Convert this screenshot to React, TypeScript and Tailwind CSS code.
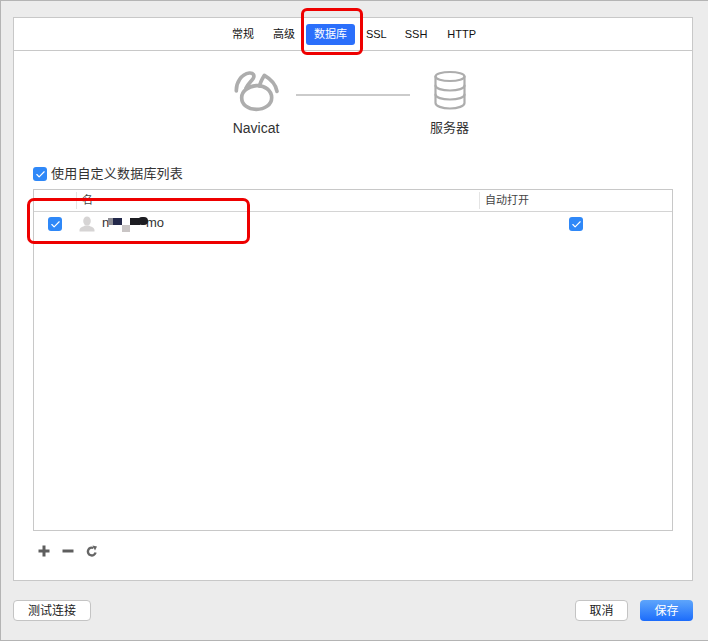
import { Check } from "lucide-react";

const font = { fontFamily: '"Liberation Sans", "Noto Sans CJK SC", sans-serif' };

const Checkbox = () => (
    <span className="flex items-center justify-center w-[14px] h-[14px] rounded-[3px] bg-[#2f88f8] shrink-0">
        <Check size={11} strokeWidth={2.5} className="text-white" />
    </span>
);

const NavicatIcon = () => (
    <svg width="45" height="42" viewBox="30 30 135 126" fill="none" stroke="#adadad" strokeWidth="11" strokeLinecap="round" strokeLinejoin="round">
        <path d="M37 93C36 68 52 42 76 39C88 38 93 47 87 56C81 65 72 72 66 84" />
        <path d="M159 94C156 76 142 58 121 46C115 56 108 67 107 78" />
        <path d="M97 77C122 75 143 92 143 113C143 134 122 148 97 148C72 148 53 134 53 113C53 94 72 79 97 77Z" />
    </svg>
);

const ServerIcon = () => (
    <svg width="32" height="40" viewBox="0 0 32 40" fill="none" stroke="#adadad" strokeWidth="2.2" strokeLinecap="round">
        <ellipse cx="16" cy="6.5" rx="14.5" ry="4.5" />
        <path d="M1.5 6.5V33C1.5 36 8 38.5 16 38.5C24 38.5 30.5 36 30.5 33V6.5" />
        <path d="M1.5 15.5C1.5 18.5 8 20.5 16 20.5C24 20.5 30.5 18.5 30.5 15.5" />
        <path d="M1.5 24.5C1.5 27.5 8 29.5 16 29.5C24 29.5 30.5 27.5 30.5 24.5" />
    </svg>
);

const UserIcon = () => (
    <svg width="16" height="16" viewBox="0 0 16 16" fill="#d6d4d4">
        <ellipse cx="8" cy="5" rx="3.8" ry="4.6" />
        <path d="M0.5 15.5V14C0.5 11.5 4 10.8 6 9.5H10C12 10.8 15.5 11.5 15.5 14V15.5Z" />
    </svg>
);

const tabs = [
    { label: "常规", className: "" },
    { label: "高级", className: "ml-[1px]" },
    { label: "数据库", className: "" },
    { label: "SSL", className: "" },
    { label: "SSH", className: "" },
    { label: "HTTP", className: "ml-[2px]" },
];

const App = () => {
    return (
        <div className="relative flex flex-col w-[708px] h-[641px] bg-[#ececec] border-l border-t border-b border-[#b4b4b4] text-[#222]" style={font}>
            <div className="flex flex-col ml-[12px] mr-[15px] mt-[16px] h-[564px] bg-white border border-[#c8c8c8]">
                {/* pestañas */}
                <div className="flex items-center justify-center h-[33px] pl-[2px] border-b border-[#c8c8c8] text-[11px] gap-[4px] text-[#111] shrink-0">
                    {tabs.map((tab, index) => (
                        <span
                            key={tab.label}
                            className={
                                index === 2
                                    ? "flex items-center justify-center w-[49px] h-[21px] rounded-[3px] bg-[#2b6ffb] text-white"
                                    : `flex items-center justify-center h-[21px] px-[7px] ${tab.className}`
                            }
                        >
                            {tab.label}
                        </span>
                    ))}
                </div>

                {/* diagrama */}
                <div className="flex justify-center h-[115px] pt-[19px] pr-[1px] shrink-0">
                    <div className="flex flex-col items-center w-[80px] pl-[3px] gap-[7px]">
                        <NavicatIcon />
                        <span className="text-[14px] leading-[18px] text-[#333]">Navicat</span>
                    </div>
                    <div className="w-[114px] h-[2px] mt-[24px] mx-[1px] bg-[#cbcbcb]" />
                    <div className="flex flex-col items-center w-[80px] pr-[2px] gap-[6px]">
                        <ServerIcon />
                        <span className="text-[13px] leading-[18px] mt-[3px] text-[#333]">服务器</span>
                    </div>
                </div>

                <div className="flex flex-col flex-1 px-[19px]">
                    <label className="flex items-center gap-[4px] h-[14px] mt-[1px] text-[13px] tracking-[0.2px] text-[#333]">
                        <Checkbox />
                        使用自定义数据库列表
                    </label>

                    {/* tabla */}
                    <div className="flex flex-col h-[342px] mt-[8px] border border-[#c8c8c8]">
                        <div className="flex items-center h-[22px] border-b border-[#d4d4d4] text-[11px] text-[#444] shrink-0">
                            <div className="w-[43px] h-[17px] border-r border-[#e4e4e4]" />
                            <div className="flex-1 h-[17px] leading-[17px] pl-[5px] border-r border-[#e4e4e4]">名</div>
                            <div className="w-[192px] pl-[5px] leading-[17px]">自动打开</div>
                        </div>
                        <div className="flex items-center h-[24px] text-[13px] text-[#333]">
                            <div className="flex justify-center w-[43px] pr-[1px]">
                                <Checkbox />
                            </div>
                            <div className="flex items-center flex-1 pl-[2px] gap-[7px]">
                                <UserIcon />
                                <span className="relative w-[62px] -mt-[2px]">
                                    n
                                    <span className="absolute left-[44px] top-0">mo</span>
                                    <span className="absolute left-[6px] top-[5px] w-[5px] h-[7px] bg-[#8d8d94]" />
                                    <span className="absolute left-[11px] top-[5px] w-[9px] h-[7px] bg-[#23284a]" />
                                    <span className="absolute left-[20px] top-[12px] w-[8px] h-[7px] bg-[#c9c5c5]" />
                                    <span className="absolute left-[28px] top-[5px] w-[10px] h-[7px] bg-[#1d1d22]" />
                                    <span className="absolute left-[36px] top-[4px] w-[10px] h-[8px] rounded-full bg-[#1d1d22]" />
                                </span>
                            </div>
                            <div className="w-[192px] pl-[89px]">
                                <Checkbox />
                            </div>
                        </div>
                    </div>

                    {/* acciones */}
                    <div className="flex items-center h-[12px] mt-[14px] pl-[5px] gap-[12px]">
                        <svg width="12" height="12" viewBox="0 0 12 12" fill="#5e5e5e">
                            <path d="M4.5 0.5H7.5V4.5H11.5V7.5H7.5V11.5H4.5V7.5H0.5V4.5H4.5Z" />
                        </svg>
                        <svg width="12" height="12" viewBox="0 0 12 12" fill="#5e5e5e">
                            <path d="M0.5 4.5H11.5V7.5H0.5Z" />
                        </svg>
                        <svg width="12" height="12" viewBox="0 0 12 12" fill="none">
                            <path d="M9.6 7.5A3.9 3.9 0 1 1 7.5 3" stroke="#666" strokeWidth="2.4" />
                            <path d="M6.5 0.5L11 1.5L9 5.5Z" fill="#666" />
                        </svg>
                    </div>
                </div>
            </div>

            {/* pie */}
            <div className="flex items-center justify-between ml-[12px] mr-[15px] mt-[19px]">
                <button className="w-[78px] h-[21px] rounded-[4px] bg-white border border-[#c4c4c4] text-[12px] leading-none text-[#222]">
                    测试连接
                </button>
                <div className="flex gap-[12px]">
                    <button className="w-[53px] h-[21px] rounded-[4px] bg-white border border-[#c4c4c4] text-[12px] leading-none text-[#222]">
                        取消
                    </button>
                    <button className="w-[53px] h-[21px] rounded-[4px] bg-gradient-to-b from-[#5ea5fb] to-[#1b6bfb] text-[12px] leading-none text-white">
                        保存
                    </button>
                </div>
            </div>

            {/* anotaciones en rojo */}
            <div className="absolute left-[300px] top-[7px] w-[62px] h-[47px] rounded-[6px] border-[3px] border-[#ee0000]" />
            <div className="absolute left-[26px] top-[197px] w-[223px] h-[46px] rounded-[7px] border-[3px] border-[#ee0000]" />
        </div>
    );
};

export default App;
